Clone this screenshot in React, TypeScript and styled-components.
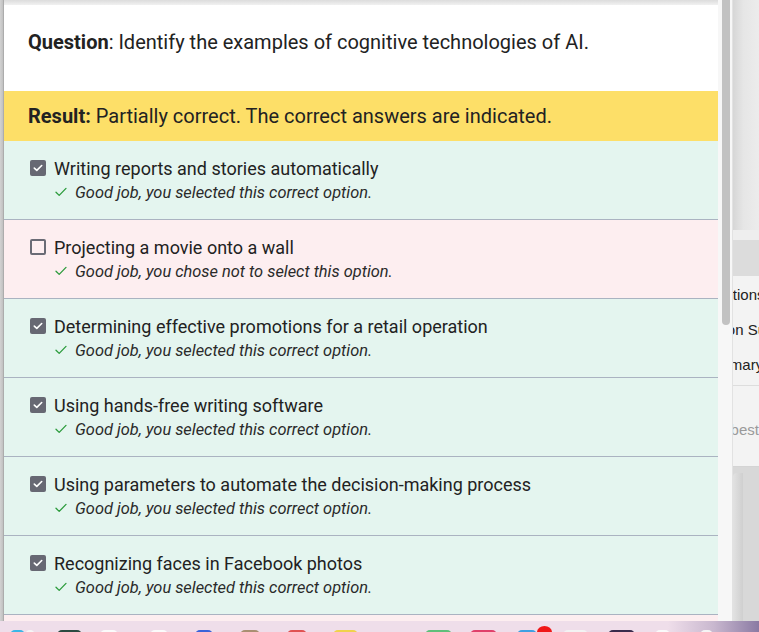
import React from "react";
import styled, { createGlobalStyle } from "styled-components";

const GlobalStyle = createGlobalStyle`
  html, body {
    margin: 0;
    padding: 0;
    background: #d9d9d9;
  }
  * {
    box-sizing: border-box;
  }
`;

const Screen = styled.div`
  width: 759px;
  height: 632px;
  display: flex;
  flex-direction: column;
  overflow: hidden;
  font-family: Roboto, "Noto Sans", Arial, sans-serif;
`;

const Stage = styled.div`
  flex: 0 0 621px;
  display: flex;
  overflow: hidden;
`;

const LeftEdge = styled.div`
  flex: 0 0 4px;
  background: linear-gradient(to right, #d2d2d2, #c2c2c2 70%, #9d9d9d);
`;

const Dialog = styled.div`
  flex: 0 0 714px;
  display: flex;
  flex-direction: column;
  background: #ffffff;
`;

const TopShade = styled.div`
  flex: 0 0 5px;
  background: linear-gradient(#dcdcdc, #f1f1f1);
`;

const QuestionBox = styled.div`
  flex: 0 0 86px;
  display: flex;
  align-items: center;
  padding: 0 24px 12px;
  font-size: 20px;
  color: #222222;

  b {
    font-weight: 700;
  }
`;

const ResultBar = styled.div`
  flex: 0 0 50px;
  display: flex;
  align-items: center;
  padding: 0 24px;
  background: #fddf68;
  font-size: 20px;
  color: #222222;

  b {
    font-weight: 700;
  }
`;

const Option = styled.div<{ $tone: "ok" | "miss" }>`
  flex: 0 0 79px;
  display: flex;
  flex-direction: column;
  gap: 4px;
  padding: 17px 24px 0 26px;
  background: ${(p) => (p.$tone === "ok" ? "#e4f5ef" : "#fdeef0")};
  border-bottom: 1px solid #aab3c1;
`;

const OptionRow = styled.div`
  display: flex;
  align-items: center;
  gap: 8px;
  height: 20px;
  font-size: 18px;
  color: #222222;
`;

const Box = styled.span<{ $checked: boolean }>`
  flex: 0 0 16px;
  width: 16px;
  height: 16px;
  border-radius: 2px;
  display: flex;
  align-items: center;
  justify-content: center;
  background: ${(p) => (p.$checked ? "#676873" : "transparent")};
  border: ${(p) => (p.$checked ? "none" : "2px solid #6a6b75")};
`;

const Feedback = styled.div`
  display: flex;
  align-items: center;
  gap: 8px;
  height: 20px;
  padding-left: 25px;
  font-size: 16.4px;
  font-style: italic;
  color: #2a2a2a;
`;

const Track = styled.div`
  flex: 0 0 15px;
  background: #f7f7f7;
  padding-left: 4px;
  border-right: 1px solid #e2e2e2;
`;

const Thumb = styled.div`
  width: 8px;
  height: 325px;
  background: #c2c2c2;
  border-radius: 0 0 4px 4px;
`;

const Behind = styled.div`
  flex: 1;
  display: flex;
  flex-direction: column;
  overflow: hidden;
  font-family: "Liberation Sans", Arial, sans-serif;
  font-size: 15px;
  color: #222;
`;

const BehindTop = styled.div`
  flex: 0 0 230px;
  background: linear-gradient(to right, #d6d6d6, #e6e6e6 40%, #ececec);
`;

const BehindStrip = styled.div`
  flex: 0 0 10px;
  background: #eeeeee;
`;

const BehindHead = styled.div`
  flex: 0 0 36px;
  background: #dcdcdc;
`;

const BehindList = styled.div`
  flex: 0 0 110px;
  display: flex;
  flex-direction: column;
  padding-top: 10px;
  gap: 18px;
  background: #f3f3f3;
  border-bottom: 1px solid #dddddd;
`;

const BehindLine = styled.div<{ $shift: number; $muted?: boolean }>`
  white-space: nowrap;
  height: 17px;
  line-height: 17px;
  margin-left: ${(p) => -p.$shift}px;
  color: ${(p) => (p.$muted ? "#9a9a9a" : "#222")};
`;

const BehindNote = styled.div`
  flex: 0 0 81px;
  display: flex;
  align-items: center;
  padding-top: 6px;
  background: #f3f3f3;
  border-bottom: 1px solid #d4d4d4;
`;

const BehindFoot = styled.div`
  flex: 1;
  display: flex;
  background: #d8d8d8;
`;

const BehindFrame = styled.div`
  width: 10px;
  margin-top: 6px;
  background: linear-gradient(to right, #e2e2e2, #cfcfcf);
  border-radius: 4px 0 0 0;
`;

const Dock = styled.div`
  flex: 0 0 11px;
  display: flex;
  align-items: flex-start;
  padding-top: 7px;
  background: linear-gradient(to right, #efdeea 88%, #c9b8cf 94%, #8a7aa3);
  overflow: hidden;
`;

const DockIcon = styled.span<{ $color: string; $w: number; $gap: number; $round?: boolean }>`
  flex: 0 0 ${(p) => p.$w}px;
  height: 12px;
  margin-left: ${(p) => p.$gap}px;
  margin-top: ${(p) => (p.$round ? -2 : 2)}px;
  background: ${(p) => p.$color};
  border-radius: ${(p) => (p.$round ? "50%" : "5px 5px 0 0")};
`;

const CheckMark = () => (
  <svg width="10" height="8" viewBox="0 0 10 8" fill="none">
    <path d="M1.3 4.1 L3.8 6.4 L8.7 1.5" stroke="#ffffff" strokeWidth="1.6" strokeLinecap="round" strokeLinejoin="round" />
  </svg>
);

const GreenTick = () => (
  <svg width="12" height="10" viewBox="0 0 12 10" fill="none">
    <path d="M1 5.2 L4.2 8.4 L11 1.4" stroke="#2b9b3b" strokeWidth="1.3" strokeLinecap="round" strokeLinejoin="round" />
  </svg>
);

type Choice = {
  text: string;
  checked: boolean;
  note: string;
};

const choices: Choice[] = [
  { text: "Writing reports and stories automatically", checked: true, note: "Good job, you selected this correct option." },
  { text: "Projecting a movie onto a wall", checked: false, note: "Good job, you chose not to select this option." },
  { text: "Determining effective promotions for a retail operation", checked: true, note: "Good job, you selected this correct option." },
  { text: "Using hands-free writing software", checked: true, note: "Good job, you selected this correct option." },
  { text: "Using parameters to automate the decision-making process", checked: true, note: "Good job, you selected this correct option." },
  { text: "Recognizing faces in Facebook photos", checked: true, note: "Good job, you selected this correct option." },
  { text: "Sorting mail by hand", checked: false, note: "Good job, you chose not to select this option." },
];

const dockIcons = [
  { color: "#3cb6e6", w: 15, gap: 10 },
  { color: "#f6f6f6", w: 10, gap: 0 },
  { color: "#2c4a41", w: 25, gap: 22 },
  { color: "#fbfbfb", w: 18, gap: 18 },
  { color: "#fbfbfb", w: 18, gap: 32 },
  { color: "#3b63d9", w: 18, gap: 27 },
  { color: "#a98f72", w: 20, gap: 27 },
  { color: "#e05252", w: 20, gap: 27 },
  { color: "#f0d24a", w: 25, gap: 26 },
  { color: "#5fbf7a", w: 27, gap: 67 },
  { color: "#e0406a", w: 27, gap: 18 },
  { color: "#3fa0e2", w: 20, gap: 20 },
  { color: "#f01818", w: 15, gap: 0, round: true },
  { color: "#f3f3f3", w: 25, gap: 11 },
  { color: "#3a2b4c", w: 27, gap: 20 },
  { color: "#fafafa", w: 15, gap: 20 },
  { color: "#f5f5f5", w: 13, gap: 30 },
];

const App = () => {
  return (
    <>
      <GlobalStyle />
      <Screen>
        <Stage>
          <LeftEdge />
          <Dialog>
            <TopShade />
            <QuestionBox>
              <span>
                <b>Question</b>: Identify the examples of cognitive technologies of AI.
              </span>
            </QuestionBox>
            <ResultBar>
              <span>
                <b>Result:</b> Partially correct. The correct answers are indicated.
              </span>
            </ResultBar>
            {choices.map((c) => (
              <Option key={c.text} $tone={c.checked ? "ok" : "miss"}>
                <OptionRow>
                  <Box $checked={c.checked}>{c.checked && <CheckMark />}</Box>
                  {c.text}
                </OptionRow>
                <Feedback>
                  <GreenTick />
                  {c.note}
                </Feedback>
              </Option>
            ))}
          </Dialog>
          <Track>
            <Thumb />
          </Track>
          <Behind>
            <BehindTop />
            <BehindStrip />
            <BehindHead />
            <BehindList>
              <BehindLine $shift={36}>Questions</BehindLine>
              <BehindLine $shift={62}>Discussion Summary</BehindLine>
              <BehindLine $shift={34}>Summary</BehindLine>
            </BehindList>
            <BehindNote>
              <BehindLine $shift={61} $muted>Try your best</BehindLine>
            </BehindNote>
            <BehindFoot>
              <BehindFrame />
            </BehindFoot>
          </Behind>
        </Stage>
        <Dock>
          {dockIcons.map((d, i) => (
            <DockIcon key={i} $color={d.color} $w={d.w} $gap={d.gap} $round={d.round} />
          ))}
        </Dock>
      </Screen>
    </>
  );
};

export default App;
